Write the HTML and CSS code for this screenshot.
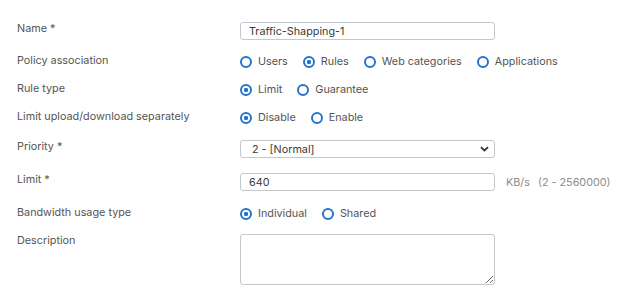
FILE: index.html
```html
<!DOCTYPE html>
<html lang="en">
<head>
    <meta charset="UTF-8">
    <title>Traffic shaping policy</title>
    <link rel="stylesheet" href="styles.css">
</head>
<body>
    <form class="policy-form">
        <div class="row">
            <label class="label label-field">Name *</label>
            <input class="field" type="text" value="Traffic-Shapping-1">
        </div>

        <div class="row">
            <span class="label">Policy association</span>
            <div class="options">
                <label class="option"><input type="radio" name="assoc"> Users</label>
                <label class="option"><input type="radio" name="assoc" checked> Rules</label>
                <label class="option"><input type="radio" name="assoc"> Web categories</label>
                <label class="option"><input type="radio" name="assoc"> Applications</label>
            </div>
        </div>

        <div class="row">
            <span class="label">Rule type</span>
            <div class="options">
                <label class="option"><input type="radio" name="ruletype" checked> Limit</label>
                <label class="option"><input type="radio" name="ruletype"> Guarantee</label>
            </div>
        </div>

        <div class="row">
            <span class="label">Limit upload/download separately</span>
            <div class="options">
                <label class="option"><input type="radio" name="separate" checked> Disable</label>
                <label class="option"><input type="radio" name="separate"> Enable</label>
            </div>
        </div>

        <div class="row row-loose">
            <label class="label label-field">Priority *</label>
            <div class="select-wrap">
                <select class="field select">
                    <option>2 - [Normal]</option>
                </select>
                <svg class="chevron" width="9" height="6" viewBox="0 0 9 6">
                    <path d="M1 1.2 L4.5 4.5 L8 1.2" fill="none" stroke="#333" stroke-width="1.8"/>
                </svg>
            </div>
        </div>

        <div class="row">
            <label class="label label-field">Limit *</label>
            <input class="field" type="text" value="640">
            <span class="hint">KB/s <span class="range">(2 - 2560000)</span></span>
        </div>

        <div class="row">
            <span class="label">Bandwidth usage type</span>
            <div class="options">
                <label class="option"><input type="radio" name="usage" checked> Individual</label>
                <label class="option"><input type="radio" name="usage"> Shared</label>
            </div>
        </div>

        <div class="row row-tight">
            <label class="label label-field">Description</label>
            <textarea class="field area"></textarea>
        </div>
    </form>
</body>
</html>
```

FILE: styles.css
```css
:root {
    --text: #545454;
    --text-input: #3a3a3a;
    --muted: #8c8c8c;
    --border: #c3c8cf;
    --blue: #2474cc;
}

* {
    margin: 0;
    padding: 0;
    box-sizing: border-box;
}

body {
    font-family: Inter, "Noto Sans", sans-serif;
    font-size: 10.8px;
    color: var(--text);
    background: #ffffff;
}

.policy-form {
    display: flex;
    flex-direction: column;
    gap: 15px;
    padding: 22px 0 0 17px;
}

.row {
    display: flex;
    align-items: flex-start;
}

.row-loose {
    margin-top: 1px;
}

.row-tight {
    margin-top: -1px;
}

.label {
    width: 223px;
    flex-shrink: 0;
    line-height: 12px;
}

.label-field {
    padding-top: 1px;
}

.field {
    width: 255px;
    height: 18px;
    border: 1px solid var(--border);
    border-radius: 3px;
    padding: 0 8px;
    font: inherit;
    color: var(--text-input);
    background: #fff;
    outline: none;
}

.select-wrap {
    position: relative;
}

.select {
    appearance: none;
    -webkit-appearance: none;
    padding-left: 11px;
}

.chevron {
    position: absolute;
    right: 6px;
    top: 6px;
}

.area {
    height: 51px;
    resize: both;
}

.hint {
    margin-left: 11px;
    line-height: 19px;
    color: var(--muted);
}

.range {
    margin-left: 5px;
}

.options {
    display: flex;
    gap: 15px;
    height: 13px;
    align-items: center;
}

.option {
    display: flex;
    align-items: center;
    gap: 6px;
    line-height: 13px;
}

.option input {
    appearance: none;
    -webkit-appearance: none;
    width: 12px;
    height: 12px;
    border: 2px solid var(--blue);
    border-radius: 50%;
    background: #fff;
}

.option input:checked {
    background: radial-gradient(circle, var(--blue) 0, var(--blue) 1.9px, #fff 2.5px);
}
```
